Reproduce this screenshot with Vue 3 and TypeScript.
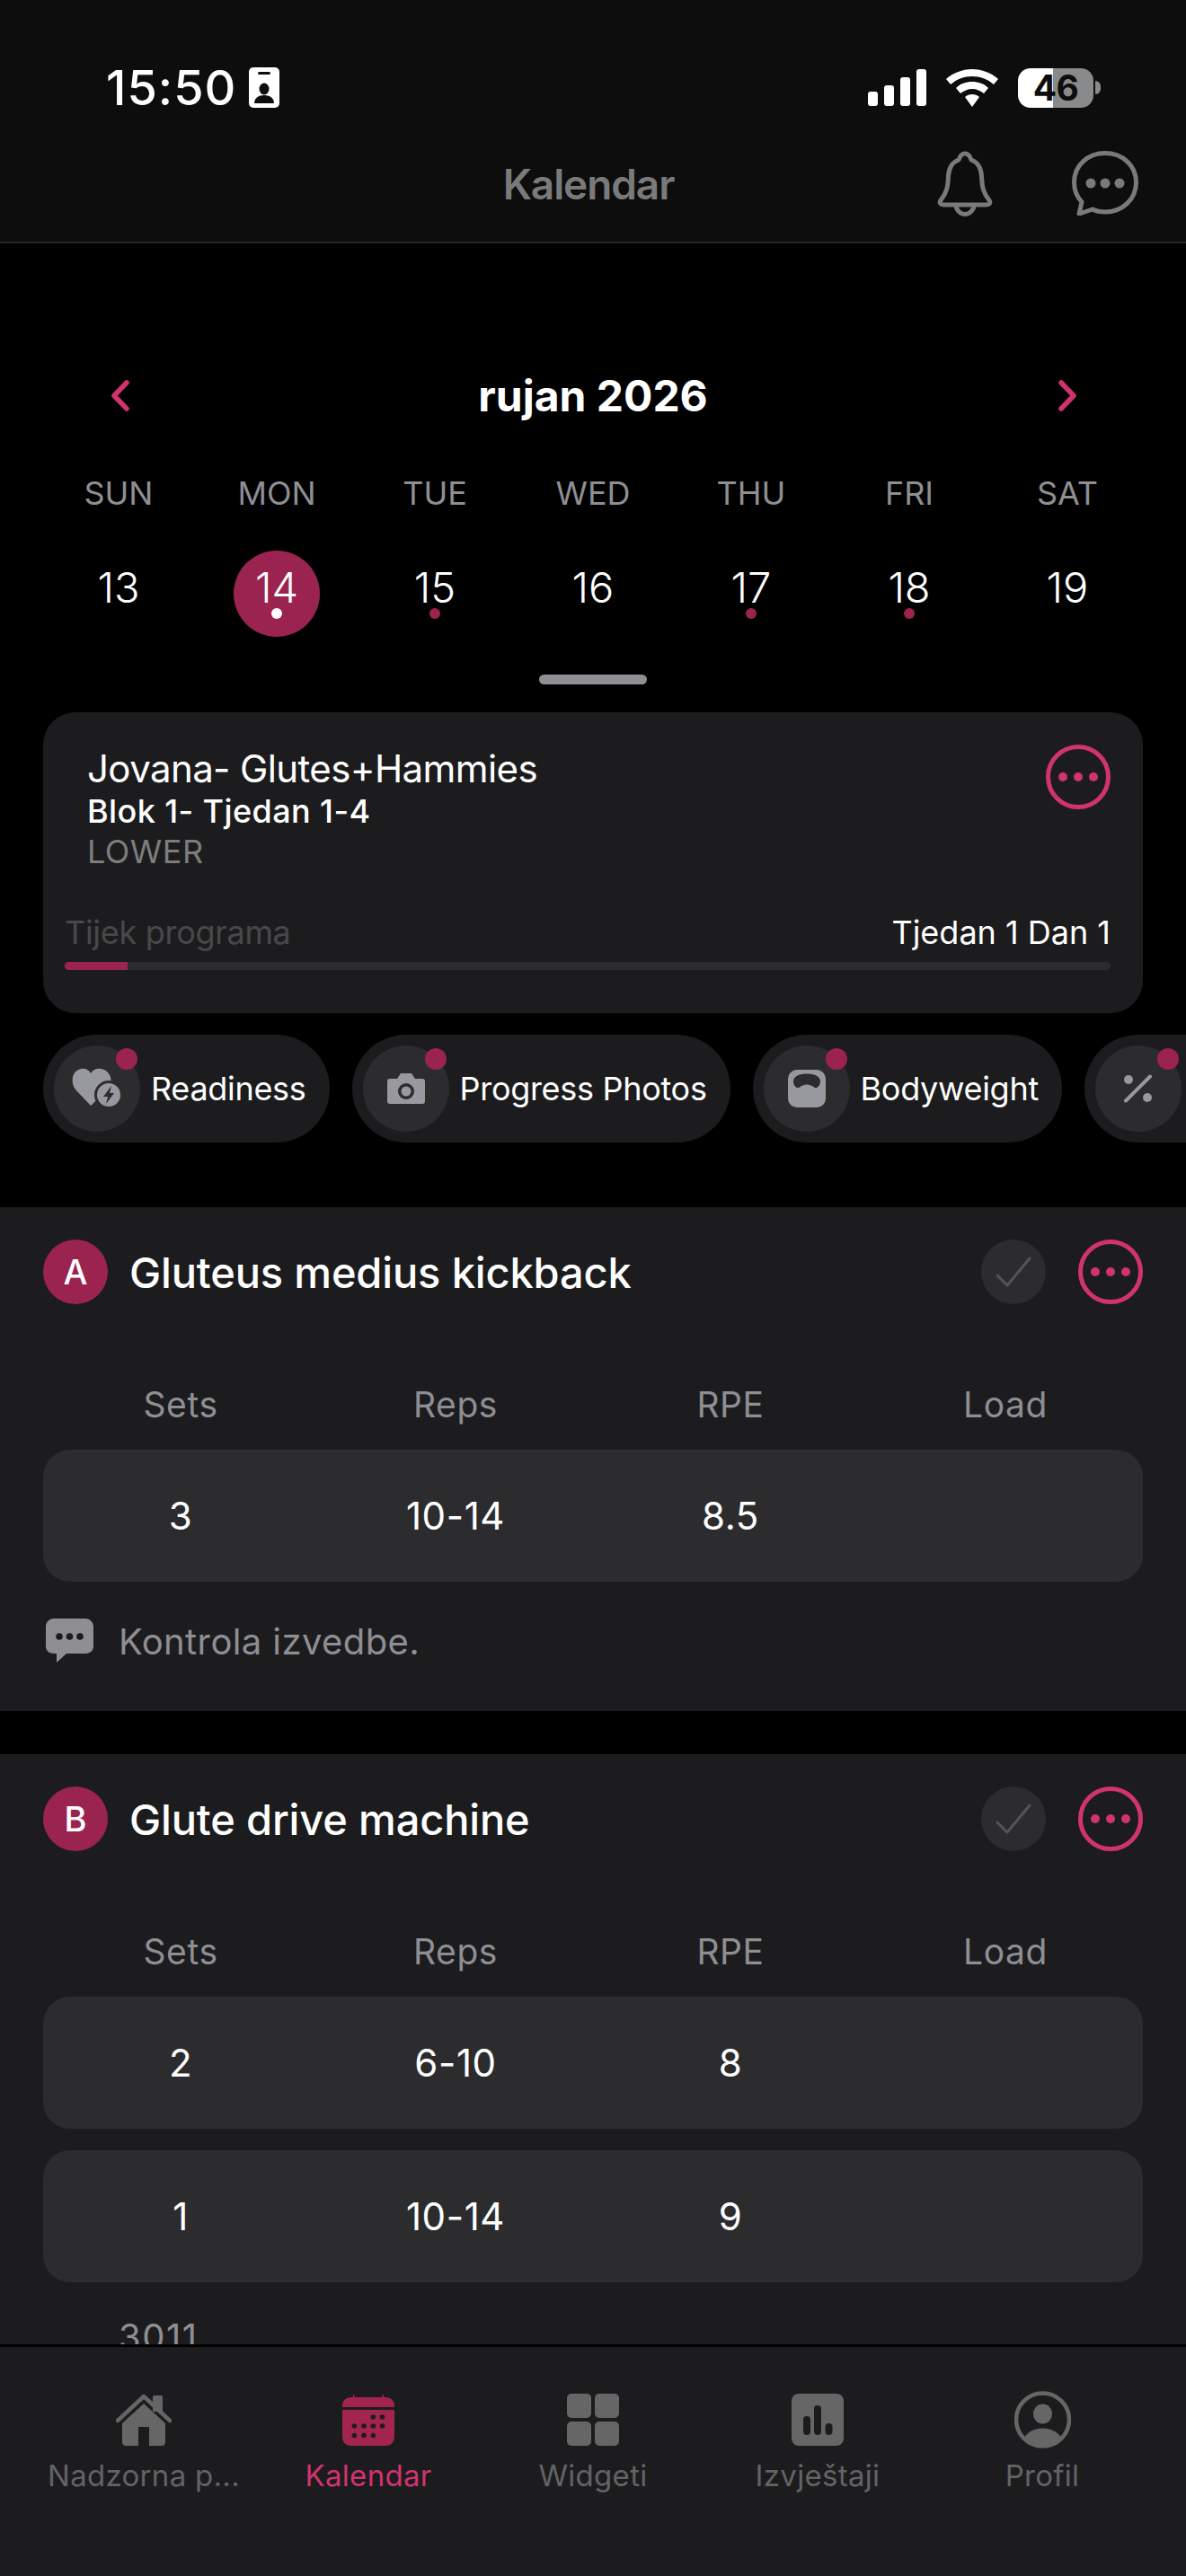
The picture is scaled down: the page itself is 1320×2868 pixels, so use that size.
<template>
  <div class="page">
    <header class="top">
      <div class="status">
        <div class="status-left">
          <span class="time">15:50</span>
          <svg class="id-card" width="34" height="45" viewBox="0 0 34 45">
            <rect width="34" height="45" rx="5" fill="#fff" />
            <rect x="10" y="5" width="14" height="3" rx="1.5" fill="#0d0d0d" />
            <ellipse cx="17" cy="24" rx="5.5" ry="6.5" fill="#0d0d0d" />
            <path d="M6 40c0-6 5-9 11-9s11 3 11 9z" fill="#0d0d0d" />
          </svg>
        </div>
        <div class="status-right">
          <div class="signal">
            <i class="b1"></i><i class="b2"></i><i class="b3"></i><i class="b4"></i>
          </div>
          <svg width="58" height="42" viewBox="0 0 58 42">
            <path d="M29 0c11 0 21 4 29 11l-5 6C46 11 38 8 29 8s-17 3-24 9l-5-6C8 4 18 0 29 0z" fill="#fff" />
            <path d="M29 14c7 0 13 2 18 7l-5 6c-4-3-8-5-13-5s-9 2-13 5l-5-6c5-5 11-7 18-7z" fill="#fff" />
            <path d="M29 28c3 0 6 1 8 3l-8 11-8-11c2-2 5-3 8-3z" fill="#fff" />
          </svg>
          <div class="battery">
            <div class="battery-body">46</div>
            <div class="battery-tip"></div>
          </div>
        </div>
      </div>
      <div class="nav">
        <span></span>
        <span class="nav-title">Kalendar</span>
        <div class="nav-icons">
          <svg width="62" height="73" viewBox="0 0 62 73" fill="none" stroke="#7a7a7a" stroke-width="5" stroke-linejoin="round">
            <path d="M31 3C35 3 37 7 38 10 46 13 49 20 49.5 28 50 40 51 46 58 55 60 58 58 60 55 60H7C4 60 2 58 4 55 11 46 12 40 12.5 28 13 20 16 13 24 10 25 7 27 3 31 3Z" />
            <path d="M21 60C21 66 26 70.5 31 70.5S41 66 41 60" />
          </svg>
          <svg width="74" height="72" viewBox="0 0 74 72">
            <path d="M37 2.5C56 2.5 71.5 16 71.5 35S56 68 37 68C31 68 27 67 23 65L8 70 11 57C5.5 51 2.5 43 2.5 35 2.5 16 18 2.5 37 2.5Z" fill="none" stroke="#7a7a7a" stroke-width="5" stroke-linejoin="round" />
            <circle cx="21" cy="36" r="5.5" fill="#7a7a7a" />
            <circle cx="37" cy="36" r="5.5" fill="#7a7a7a" />
            <circle cx="53" cy="36" r="5.5" fill="#7a7a7a" />
          </svg>
        </div>
      </div>
    </header>

    <main class="content">
      <section class="calendar">
        <div class="month">
          <svg width="21" height="35" viewBox="0 0 21 35" fill="none" stroke="#d1336f" stroke-width="5.5" stroke-linecap="round" stroke-linejoin="round">
            <polyline points="18,3 4,17.5 18,32" />
          </svg>
          <span class="month-name">rujan 2026</span>
          <svg class="month-next" width="21" height="35" viewBox="0 0 21 35" fill="none" stroke="#d1336f" stroke-width="5.5" stroke-linecap="round" stroke-linejoin="round">
            <polyline points="3,3 17,17.5 3,32" />
          </svg>
        </div>
        <div class="weekdays">
          <span v-for="d in weekdays" :key="d">{{ d }}</span>
        </div>
        <div class="dates">
          <div v-for="d in dates" :key="d.num" class="date" :class="{ active: d.active }">
            <span class="date-num">{{ d.num }}</span>
            <i v-if="d.dot" class="date-dot"></i>
          </div>
        </div>
        <div class="handle"></div>
      </section>

      <section class="program">
        <div class="program-top">
          <div class="program-text">
            <div class="program-name">Jovana- Glutes+Hammies</div>
            <div class="program-block">Blok 1- Tjedan 1-4</div>
            <div class="program-day">LOWER</div>
          </div>
          <button class="more">
            <i></i><i></i><i></i>
          </button>
        </div>
        <div class="progress-label">
          <span class="progress-title">Tijek programa</span>
          <span>Tjedan 1 Dan 1</span>
        </div>
        <div class="progress">
          <div class="progress-fill" :style="{ width: progress + '%' }"></div>
        </div>
      </section>

      <section class="chips">
        <div class="chip">
          <div class="chip-icon">
            <svg width="56" height="46" viewBox="0 0 56 46">
              <path d="M21 42 4 24C-2 16 0 3 10 1 15 0 19 2 21 6 23 2 28 0 33 1 42 3 46 12 42 22Z" fill="#98989f" />
              <circle cx="41" cy="30" r="16" fill="#2c2c2e" />
              <circle cx="41" cy="30" r="13" fill="#98989f" />
              <path d="M44 20 35 32h5l-2 8 9-12h-5z" fill="#2c2c2e" />
            </svg>
            <i class="chip-badge"></i>
          </div>
          <span>Readiness</span>
        </div>
        <div class="chip">
          <div class="chip-icon">
            <svg width="42" height="34" viewBox="0 0 42 34">
              <path d="M3 6H11L14 1.5C14.500.5 15 0 16 0H26C27 0 27.500.5 28 1.5L31 6H39C41 6 42 7 42 9V31C42 33 41 34 39 34H3C1 34 0 33 0 31V9C0 7 1 6 3 6Z" fill="#98989f" />
              <circle cx="21" cy="20" r="9" fill="#2c2c2e" />
              <circle cx="21" cy="20" r="5.500" fill="#98989f" />
            </svg>
            <i class="chip-badge"></i>
          </div>
          <span>Progress Photos</span>
        </div>
        <div class="chip">
          <div class="chip-icon">
            <svg width="42" height="42" viewBox="0 0 42 42">
              <rect width="42" height="42" rx="10" fill="#98989f" />
              <path d="M6 13C6 7 13 4.500 21 4.500S36 7 36 13C36 17 33 21 30 20 27 18 24 16.500 21 16.500S15 18 12 20C9 21 6 17 6 13Z" fill="#2c2c2e" />
            </svg>
            <i class="chip-badge"></i>
          </div>
          <span>Bodyweight</span>
        </div>
        <div class="chip chip-cut">
          <div class="chip-icon">
            <svg width="33" height="32" viewBox="0 0 33 32" fill="#98989f">
              <path d="M30 2.500 3 29.500" stroke="#98989f" stroke-width="4" stroke-linecap="round" />
              <circle cx="6" cy="6" r="5" />
              <circle cx="27" cy="26" r="5" />
            </svg>
            <i class="chip-badge"></i>
          </div>
        </div>
      </section>

      <section v-for="ex in exercises" :key="ex.letter" class="exercise">
        <div class="ex-head">
          <span class="ex-letter">{{ ex.letter }}</span>
          <span class="ex-name">{{ ex.name }}</span>
          <button class="check">
            <svg width="72" height="72" viewBox="0 0 72 72" fill="none" stroke="#545456" stroke-width="3" stroke-linecap="round" stroke-linejoin="round">
              <polyline points="18,40 29,51 54,21" />
            </svg>
          </button>
          <button class="more">
            <i></i><i></i><i></i>
          </button>
        </div>
        <div class="ex-cols">
          <span v-for="c in columns" :key="c">{{ c }}</span>
        </div>
        <div v-for="(row, i) in ex.rows" :key="i" class="ex-row">
          <span>{{ row.sets }}</span>
          <span>{{ row.reps }}</span>
          <span>{{ row.rpe }}</span>
          <span></span>
        </div>
        <div v-if="ex.note" class="ex-note">
          <svg width="53" height="49" viewBox="0 0 53 49">
            <path d="M9 0H44C49 0 53 4 53 9V31C53 36 49 39 44 39H23L12 49V39H9C4 39 0 36 0 31V9C0 4 4 0 9 0Z" fill="#8e8e93" />
            <circle cx="15" cy="20" r="3.800" fill="#1c1c1e" />
            <circle cx="26.500" cy="20" r="3.800" fill="#1c1c1e" />
            <circle cx="38" cy="20" r="3.800" fill="#1c1c1e" />
          </svg>
          <span class="ex-note-text">{{ ex.note }}</span>
        </div>
        <div v-if="ex.tempo" class="ex-tempo">{{ ex.tempo }}</div>
      </section>
    </main>

    <footer class="tabs">
      <div class="tab">
        <svg width="62" height="64" viewBox="0 0 62 64">
          <g transform="translate(0 3)">
            <rect x="41" y="2" width="11" height="18" rx="1.500" fill="#666" />
            <polyline points="2,30 31,3 60,30" fill="none" stroke="#666" stroke-width="4.500" stroke-linecap="round" stroke-linejoin="round" />
            <path d="M7 33 31 11 55 33V54C55 56.500 53.500 58 51 58H37V37H25V58H11C8.500 58 7 56.500 7 54Z" fill="#666" />
          </g>
        </svg>
        <span>Nadzorna p...</span>
      </div>
      <div class="tab tab-active">
        <svg width="58" height="64" viewBox="0 0 58 64">
          <g transform="translate(0 3)" fill="#a3244f">
            <path d="M12 4V0.500L14 3 14 4H44V3L46 .5V4H48C54 4 58 8 58 13V15H0V13C0 8 4 4 10 4Z" />
            <path d="M0 18H58V48C58 54 54 58 48 58H10C4 58 0 54 0 48Z" />
            <g fill="#1c1c1e">
              <circle cx="34.400" cy="26" r="2.800" /><circle cx="44.500" cy="26" r="2.800" />
              <circle cx="13.400" cy="36" r="2.800" /><circle cx="24" cy="36" r="2.800" /><circle cx="34.400" cy="36" r="2.800" /><circle cx="44.500" cy="36" r="2.800" />
              <circle cx="13.400" cy="46.500" r="2.800" /><circle cx="24" cy="46.500" r="2.800" /><circle cx="34.400" cy="46.500" r="2.800" />
            </g>
          </g>
        </svg>
        <span>Kalendar</span>
      </div>
      <div class="tab">
        <svg width="58" height="64" viewBox="0 0 58 64" fill="#666">
          <g transform="translate(0 3)">
            <rect width="27" height="27" rx="5" /><rect x="31" width="27" height="27" rx="5" />
            <rect y="31" width="27" height="27" rx="5" /><rect x="31" y="31" width="27" height="27" rx="5" />
          </g>
        </svg>
        <span>Widgeti</span>
      </div>
      <div class="tab">
        <svg width="58" height="64" viewBox="0 0 58 64">
          <g transform="translate(0 3)">
            <rect width="58" height="58" rx="8" fill="#666" />
            <rect x="13" y="25" width="8" height="21" rx="4" fill="#1c1c1e" />
            <rect x="25" y="13" width="8" height="33" rx="4" fill="#1c1c1e" />
            <rect x="37.500" y="33" width="8" height="13" rx="4" fill="#1c1c1e" />
          </g>
        </svg>
        <span>Izvještaji</span>
      </div>
      <div class="tab">
        <svg width="63" height="64" viewBox="0 0 63 64">
          <circle cx="31.500" cy="32" r="29.500" fill="none" stroke="#666" stroke-width="4.500" />
          <ellipse cx="31.500" cy="25.500" rx="10.500" ry="11" fill="#666" />
          <path d="M11 52C15 45 23 41.500 31.500 41.500S48 45 52 52A29 29 0 0 1 11 52Z" fill="#666" />
        </svg>
        <span>Profil</span>
      </div>
    </footer>
  </div>
</template>

<script setup lang="ts">
interface DayCell {
  num: number;
  dot?: boolean;
  active?: boolean;
}

interface SetRow {
  sets: string;
  reps: string;
  rpe: string;
}

interface Exercise {
  letter: string;
  name: string;
  rows: SetRow[];
  note?: string;
  tempo?: string;
}

const progress = 6;

const weekdays = ['SUN', 'MON', 'TUE', 'WED', 'THU', 'FRI', 'SAT'];
const columns = ['Sets', 'Reps', 'RPE', 'Load'];

const dates: DayCell[] = [
  { num: 13 },
  { num: 14, dot: true, active: true },
  { num: 15, dot: true },
  { num: 16 },
  { num: 17, dot: true },
  { num: 18, dot: true },
  { num: 19 },
];

const exercises: Exercise[] = [
  {
    letter: 'A',
    name: 'Gluteus medius kickback',
    rows: [{ sets: '3', reps: '10-14', rpe: '8.5' }],
    note: 'Kontrola izvedbe.',
  },
  {
    letter: 'B',
    name: 'Glute drive machine',
    rows: [
      { sets: '2', reps: '6-10', rpe: '8' },
      { sets: '1', reps: '10-14', rpe: '9' },
    ],
    tempo: '3011',
  },
];
</script>

<style scoped>
.page {
  width: 1320px;
  height: 2868px;
  display: flex;
  flex-direction: column;
  overflow: hidden;
  background: #000;
  color: #fff;
  font-family: Inter, "Liberation Sans", sans-serif;
}

svg {
  display: block;
  flex-shrink: 0;
}

button {
  border: none;
  padding: 0;
  background: none;
}

/* header */
.top {
  flex-shrink: 0;
  height: 271px;
  box-sizing: border-box;
  padding-top: 74px;
  background: #0d0d0d;
  border-bottom: 2px solid #262626;
}

.status {
  height: 47px;
  display: flex;
  justify-content: space-between;
  align-items: center;
  padding: 0 95px 0 118px;
}

.status-left {
  display: flex;
  align-items: center;
  gap: 14px;
}

.time {
  font-size: 54px;
  font-weight: 500;
  line-height: 47px;
  letter-spacing: 1px;
}

.status-right {
  display: flex;
  align-items: center;
  gap: 22px;
}

.signal {
  display: flex;
  align-items: flex-end;
  gap: 7px;
  height: 41px;
}

.signal i {
  display: block;
  width: 11px;
  border-radius: 3px;
  background: #fff;
}

.b1 { height: 16px; }
.b2 { height: 23px; }
.b3 { height: 32px; }
.b4 { height: 41px; }

.battery {
  display: flex;
  align-items: center;
  gap: 2px;
}

.battery-body {
  width: 84px;
  height: 44px;
  border-radius: 14px;
  background: linear-gradient(90deg, #fff 46%, #8a8a8a 46%);
  color: #0d0d0d;
  font-size: 39px;
  font-weight: 700;
  line-height: 44px;
  letter-spacing: -0.5px;
  text-align: center;
}

.battery-tip {
  width: 6px;
  height: 15px;
  border-radius: 0 6px 6px 0;
  background: #8a8a8a;
}

.nav {
  margin-top: 47px;
  display: grid;
  grid-template-columns: 1fr auto 1fr;
  align-items: center;
  padding: 0 53px 0 43px;
}

.nav-title {
  font-size: 46px;
  font-weight: 600;
  letter-spacing: -1.1px;
  color: #7a7a7a;
}

.nav-icons {
  display: flex;
  justify-content: flex-end;
  gap: 88px;
}

/* scroll area */
.content {
  flex: 1;
  min-height: 0;
  overflow: hidden;
}

.calendar {
  padding: 139px 44px 0;
}

.month {
  height: 60px;
  display: flex;
  justify-content: space-between;
  align-items: center;
  padding: 0 79px;
}

.month-name {
  font-size: 48px;
  font-weight: 700;
}

.month-next {
  transform: translateX(2px);
}

.weekdays {
  margin-top: 57px;
  display: grid;
  grid-template-columns: repeat(7, 1fr);
  color: #8e8e93;
  font-size: 36px;
  line-height: 44px;
  text-align: center;
}

.dates {
  margin-top: 42px;
  display: grid;
  grid-template-columns: repeat(7, 1fr);
}

.date {
  position: relative;
  width: 96px;
  height: 96px;
  margin: 0 auto;
  box-sizing: border-box;
  padding-top: 18px;
  border-radius: 50%;
  text-align: center;
}

.date.active {
  background: #9b2350;
}

.date-num {
  display: block;
  font-size: 47px;
  font-weight: 300;
  line-height: 46px;
}

.date-dot {
  position: absolute;
  left: 42px;
  top: 64px;
  width: 12px;
  height: 12px;
  border-radius: 50%;
  background: #9b2350;
}

.date.active .date-dot {
  background: #fff;
}

.handle {
  width: 120px;
  height: 11px;
  margin: 42px auto 0;
  border-radius: 6px;
  background: #8e8e93;
}

/* program card */
.program {
  margin: 31px 48px 0;
  height: 335px;
  box-sizing: border-box;
  padding: 36px 36px 0 24px;
  border-radius: 36px;
  background: #1c1c1e;
}

.program-top {
  display: flex;
  justify-content: space-between;
  align-items: flex-start;
  padding-left: 25px;
}

.program-text {
  margin-top: 2px;
}

.program-name {
  font-size: 42px;
  line-height: 50px;
  letter-spacing: -0.6px;
}

.program-block {
  font-size: 36px;
  font-weight: 500;
  line-height: 45px;
  letter-spacing: 0.4px;
}

.program-day {
  font-size: 36px;
  line-height: 45px;
  letter-spacing: 0.5px;
  color: #7d7d7d;
}

.more {
  position: relative;
  flex-shrink: 0;
  width: 72px;
  height: 72px;
  box-sizing: border-box;
  display: flex;
  justify-content: center;
  align-items: center;
  gap: 7px;
  border: 5px solid #d1336f;
  border-radius: 50%;
}

.more i {
  display: block;
  width: 10px;
  height: 10px;
  border-radius: 50%;
  background: #d1336f;
}

.progress-label {
  margin-top: 44px;
  display: flex;
  justify-content: space-between;
  font-size: 36px;
  line-height: 46px;
}

.progress-title {
  letter-spacing: -0.3px;
  color: #48484a;
}

.progress {
  margin-top: 10px;
  height: 9px;
  border-radius: 5px;
  background: #2c2c2e;
  overflow: hidden;
}

.progress-fill {
  height: 100%;
  background: #9b2350;
}

/* chips */
.chips {
  margin-top: 24px;
  padding-left: 48px;
  display: flex;
  gap: 25px;
  overflow: hidden;
}

.chip {
  flex-shrink: 0;
  height: 120px;
  box-sizing: border-box;
  display: flex;
  align-items: center;
  gap: 12px;
  padding: 0 26px 0 12px;
  border-radius: 60px;
  background: #1c1c1e;
  font-size: 36px;
  letter-spacing: -0.3px;
}

.chip-cut {
  width: 320px;
}

.chip-icon {
  position: relative;
  flex-shrink: 0;
  width: 96px;
  height: 96px;
  display: flex;
  justify-content: center;
  align-items: center;
  border-radius: 50%;
  background: #2c2c2e;
}

.chip-badge {
  position: absolute;
  top: 3px;
  right: 3px;
  width: 24px;
  height: 24px;
  border-radius: 50%;
  background: #9b2350;
}

/* exercises */
.exercise {
  margin-top: 48px;
  padding: 36px 48px 0;
  background: #1c1c1e;
}

.chips + .exercise {
  margin-top: 72px;
}

.ex-head {
  display: flex;
  align-items: center;
  height: 72px;
}

.ex-letter {
  flex-shrink: 0;
  width: 72px;
  height: 72px;
  border-radius: 50%;
  background: #9b2350;
  font-size: 38px;
  font-weight: 500;
  line-height: 72px;
  text-align: center;
}

.ex-name {
  flex: 1;
  margin-left: 24px;
  font-size: 47px;
  font-weight: 500;
  letter-spacing: -0.15px;
}

.check {
  width: 72px;
  height: 72px;
  margin-right: 36px;
  border-radius: 50%;
  background: #2c2c2e;
}

.ex-cols {
  margin-top: 88px;
  display: grid;
  grid-template-columns: repeat(4, 1fr);
  color: #8e8e93;
  font-size: 39px;
  line-height: 48px;
  letter-spacing: 0.6px;
  text-align: center;
}

.ex-row {
  margin-top: 24px;
  height: 147px;
  display: grid;
  grid-template-columns: repeat(4, 1fr);
  align-items: center;
  border-radius: 30px;
  background: #2c2c2e;
  font-size: 42px;
  letter-spacing: 0.6px;
  text-align: center;
}

.ex-cols + .ex-row {
  margin-top: 26px;
}

.ex-note {
  margin-top: 41px;
  height: 49px;
  box-sizing: content-box;
  padding: 0 0 54px 3px;
  display: flex;
  align-items: flex-start;
  gap: 28px;
  color: #8e8e93;
  font-size: 40px;
  letter-spacing: 0.4px;
}

.ex-note-text {
  padding-top: 3px;
  line-height: 46px;
}

.ex-tempo {
  margin-top: 37px;
  padding-left: 84px;
  color: #8e8e93;
  font-size: 40px;
  line-height: 48px;
  letter-spacing: 1.5px;
}

/* bottom tabs */
.tabs {
  flex-shrink: 0;
  height: 258px;
  box-sizing: border-box;
  padding: 49px 35px 0;
  display: grid;
  grid-template-columns: repeat(5, 1fr);
  align-content: start;
  border-top: 3px solid #000;
  background: #1c1c1e;
}

.tab {
  display: flex;
  flex-direction: column;
  align-items: center;
  gap: 10px;
  color: #636366;
  font-size: 33px;
  line-height: 40px;
  letter-spacing: 0.3px;
}

.tab-active {
  color: #d1336f;
}
</style>

<style>
html,
body {
  background: #000;
}
</style>
